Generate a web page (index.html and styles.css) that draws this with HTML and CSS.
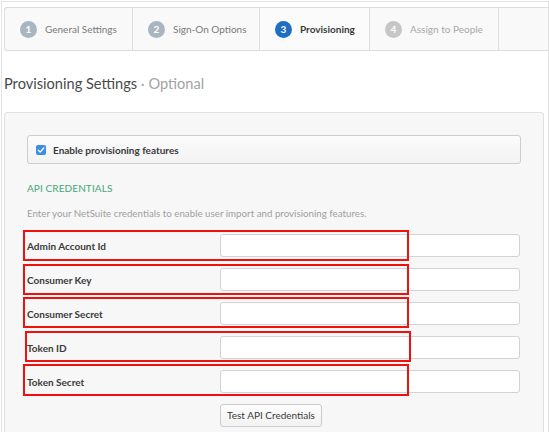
FILE: index.html
```html
<!DOCTYPE html>
<html>
<head>
<meta charset="utf-8">
<link rel="stylesheet" href="styles.css">
</head>
<body>
<div class="frame">
  <div class="tabs">
    <div class="tab done"><span class="num">1</span><span class="tlabel">General Settings</span></div>
    <div class="tab done"><span class="num">2</span><span class="tlabel">Sign-On Options</span></div>
    <div class="tab active"><span class="num">3</span><span class="tlabel">Provisioning</span></div>
    <div class="tab todo"><span class="num">4</span><span class="tlabel">Assign to People</span></div>
    <div class="tab-rest"></div>
  </div>

  <h1 class="title">Provisioning Settings <span class="opt">· Optional</span></h1>

  <div class="panel">
    <div class="enable">
      <span class="cb"><svg width="10" height="10" viewBox="0 0 10 10"><path d="M2.3 5.2 L4.2 7.1 L7.8 3" fill="none" stroke="#fff" stroke-width="1.4" stroke-linecap="round" stroke-linejoin="round"/></svg></span>
      <span class="enable-label">Enable provisioning features</span>
    </div>

    <div class="section">API CREDENTIALS</div>
    <div class="desc">Enter your NetSuite credentials to enable user import and provisioning features.</div>

    <div class="rows">
      <div class="row"><span class="hl"></span><label class="lbl">Admin Account Id</label><input class="inp" type="text"></div>
      <div class="row"><span class="hl"></span><label class="lbl">Consumer Key</label><input class="inp" type="text"></div>
      <div class="row"><span class="hl hl-3"></span><label class="lbl">Consumer Secret</label><input class="inp" type="text"></div>
      <div class="row"><span class="hl hl-4"></span><label class="lbl">Token ID</label><input class="inp" type="text"></div>
      <div class="row"><span class="hl hl-5"></span><label class="lbl">Token Secret</label><input class="inp" type="text"></div>
    </div>

    <div class="actions"><button class="btn" type="button">Test API Credentials</button></div>
  </div>
</div>
</body>
</html>
```

FILE: styles.css
```css
* { box-sizing: border-box; }
html, body { margin: 0; padding: 0; background: #fff; }
body {
  font-family: Lato, "Open Sans", Arial, sans-serif;
  color: #333;
  overflow: hidden;
}
.frame {
  margin: 1px 0 0 1px;
  width: 548px;
  height: 431px;
  border: 1px solid #e2e2e2;
  border-bottom: none;
  padding: 5px 0 0 2px;
  overflow: hidden;
}
.tabs {
  display: flex;
  height: 44px;
  border: 1px solid #dcdcdc;
  border-right: none;
  border-radius: 3px 0 0 3px;
  background: #f9f9f9;
}
.tab {
  display: flex;
  align-items: center;
  gap: 8px;
  padding: 0 15px;
  border-right: 1px solid #dedede;
  font-size: 10px;
  white-space: nowrap;
}
.tab:nth-child(1) { width: 128px; }
.tab:nth-child(2) { width: 127px; }
.tab:nth-child(3) { width: 110px; }
.tab:nth-child(4) { width: 129px; }
.tab-rest { flex: 1; }
.num {
  width: 17px; height: 17px;
  border-radius: 50%;
  display: flex; align-items: center; justify-content: center;
  color: #fff;
  font-size: 10px;
  font-weight: 700;
  flex: none;
}
.done .num { background: #a9b5bf; }
.done .tlabel { color: #7a7a7a; }
.active { background: #fbfbfb; }
.active .num { background: #1f6fc0; }
.active .tlabel { color: #3a3a3a; font-weight: 700; }
.todo .num { background: #c6c6c6; }
.todo .tlabel { color: #a8a8a8; }

.title {
  margin: 23px 0 0 0;
  font-size: 14.6px;
  line-height: 20px;
  font-weight: 400;
  color: #4a4a4a;
}
.opt { color: #a3a3a3; }

.panel {
  margin: 18px 0 0 0;
  width: 540px;
  height: 330px;
  border: 1px solid #e0e0e0;
  border-radius: 3px;
  background: #f7f7f7;
  padding: 22px 22px 0 22px;
}
.enable {
  display: flex;
  align-items: center;
  gap: 7px;
  height: 29px;
  padding: 0 8px;
  border: 1px solid #cdcdcd;
  border-radius: 3px;
  background: linear-gradient(#fbfbfb, #f3f3f3);
}
.cb {
  width: 10px; height: 10px;
  border-radius: 2px;
  background: #3a8ee6;
  display: flex;
}
.enable-label { font-size: 10px; font-weight: 700; color: #3a3a3a; }

.section {
  margin-top: 17px;
  font-size: 10px;
  line-height: 14px;
  color: #45a87b;
  letter-spacing: 0.1px;
}
.desc {
  margin-top: 11px;
  font-size: 9.75px;
  line-height: 14px;
  color: #a0a0a0;
}
.rows {
  margin-top: 14px;
  display: flex;
  flex-direction: column;
  gap: 11px;
}
.row {
  position: relative;
  display: flex;
  align-items: center;
  height: 23px;
}
.lbl {
  width: 193px;
  font-size: 10px;
  font-weight: 700;
  color: #3a3a3a;
}
.inp {
  width: 300px;
  height: 23px;
  margin: 0;
  border: 1px solid #d3d3d3;
  border-radius: 3px;
  background: #fff;
  padding: 0 6px;
}
.hl {
  position: absolute;
  left: -4px;
  top: -4px;
  width: 386px;
  height: 31px;
  border: 2px solid #f01010;
  pointer-events: none;
}
.hl-3 { top: -5px; }
.hl-4 { top: -5px; left: -2px; }
.hl-5 { top: -6px; height: 32px; }

.actions {
  margin-top: 10px;
  padding-left: 193px;
}
.btn {
  width: 102px;
  height: 23px;
  margin: 0;
  border: 1px solid #cbcbcb;
  border-radius: 3px;
  background: linear-gradient(#fdfdfd, #f2f2f2);
  font-family: Lato, "Open Sans", Arial, sans-serif;
  font-size: 10px;
  color: #3a3a3a;
  padding: 0;
}
```
